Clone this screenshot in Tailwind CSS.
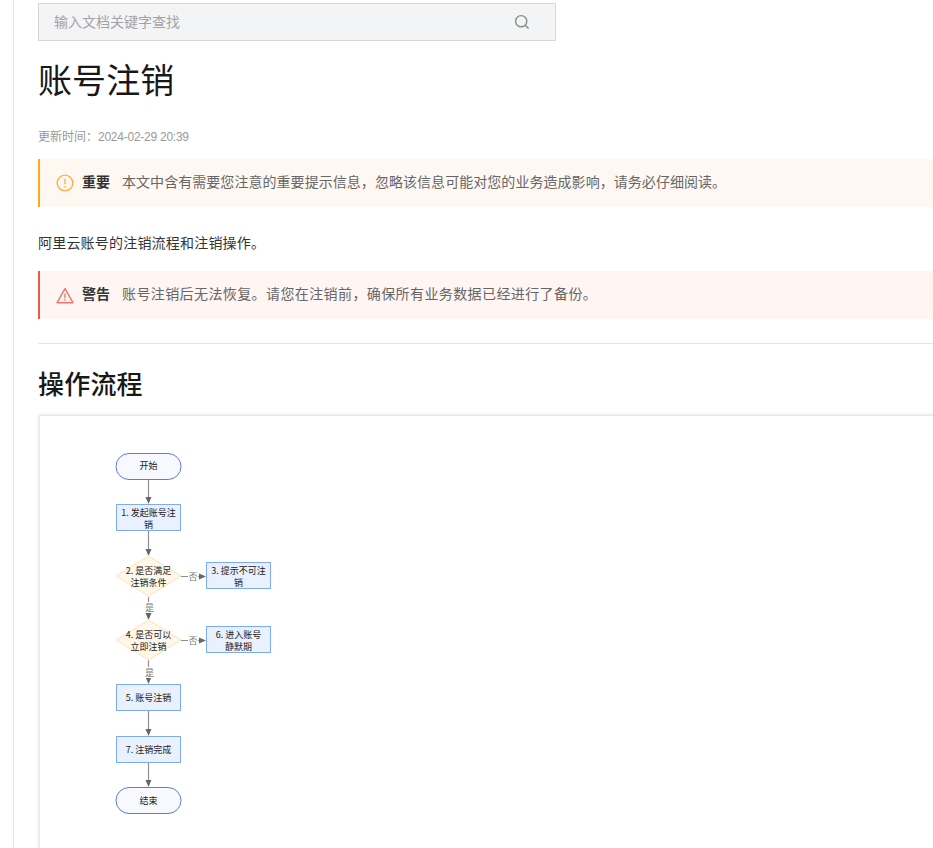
<!DOCTYPE html>
<html lang="zh">
<head>
<meta charset="utf-8">
<script src="https://cdn.jsdelivr.net/npm/@tailwindcss/browser@4"></script>
</head>
<body class="bg-white overflow-hidden font-['Noto_Sans_CJK_SC','Noto_Sans',sans-serif]">
<div class="w-[933px] h-[848px] overflow-hidden flex">
  <div class="w-[14px] shrink-0 border-r border-[#e5e5e5] h-full"></div>
  <main class="w-[919px] pl-[24px] pt-[3px] flex flex-col items-start shrink-0">
    <div class="w-[518px] h-[38px] shrink-0 bg-[#f3f4f6] border border-[#d5d7da] pl-[15px] pr-[25px] flex items-center justify-between">
      <span class="text-[14px] leading-[34px] pb-[4px] h-[36px] text-[#a3a3a3]">输入文档关键字查找</span>
      <svg width="16" height="16" viewBox="0 0 16 16" fill="none" stroke="#8c8c8c" stroke-width="1.4"><circle cx="7.2" cy="7.2" r="5.6"/><path d="M11.2 11.2L14.6 14.6"/></svg>
    </div>
    <h1 class="mt-[14px] shrink-0 text-[34px] tracking-[0.1px] leading-[48px] font-normal text-[#181818]">账号注销</h1>
    <p class="mt-[23px] shrink-0 text-[12px] leading-[20px] text-[#999999]">更新时间：<span class="font-['Liberation_Sans',sans-serif] tracking-[-0.25px]">2024-02-29 20:39</span></p>
    <div class="mt-[12px] w-[895px] h-[48px] shrink-0 bg-[#fff8f2] border-l-2 border-[#fbab13] pl-[16px] flex items-center text-[14px] whitespace-nowrap">
      <svg width="18" height="18" viewBox="0 0 17 17" fill="none" stroke="#fbb03b" stroke-width="1.3" class="shrink-0"><circle cx="8.5" cy="8.5" r="7.4"/><path d="M8.5 4.4v5.2M8.5 11.4v1.4"/></svg>
      <strong class="ml-[8px] pb-[3px] font-bold text-[#333333]">重要</strong>
      <span class="ml-[12px] pb-[3px] tracking-[0.05px] text-[#666666]">本文中含有需要您注意的重要提示信息，忽略该信息可能对您的业务造成影响，请务必仔细阅读。</span>
    </div>
    <p class="mt-[25px] mb-px shrink-0 text-[14px] leading-[20px] tracking-[0.2px] text-[#333333]">阿里云账号的注销流程和注销操作。</p>
    <div class="mt-[18px] w-[895px] h-[48px] shrink-0 bg-[#fff5f3] border-l-2 border-[#ec5a42] pl-[16px] flex items-center text-[14px] whitespace-nowrap">
      <svg width="18" height="17" viewBox="0 0 17 16" fill="none" stroke="#ee7564" stroke-width="1.3" class="shrink-0"><path d="M8.5 1.5L16 14.8H1Z" stroke-linejoin="round"/><path d="M8.5 6v4.6M8.5 11.6v1.4"/></svg>
      <strong class="ml-[8px] pb-[3px] font-bold text-[#333333]">警告</strong>
      <span class="ml-[12px] pb-[3px] tracking-[0.4px] text-[#666666]">账号注销后无法恢复。请您在注销前，确保所有业务数据已经进行了备份。</span>
    </div>
    <div class="mt-[24px] w-[895px] shrink-0 border-t border-[#e5e5e5]"></div>
    <h2 class="mt-[20px] mb-px shrink-0 text-[26px] tracking-[0.2px] leading-[38px] font-medium text-[#181818]">操作流程</h2>
    <div class="mt-[12px] ml-px w-[900px] h-[500px] shrink-0 border border-[#e8e8e8] shadow-[0_0_4px_rgba(0,0,0,0.12)]">
      <svg width="300" height="420" viewBox="40 416 300 420" font-size="9" fill="#222222" text-anchor="middle" font-family="'Noto Sans CJK SC',sans-serif">
        <g stroke="#909090" stroke-width="1.2" fill="none">
          <path d="M148.500 479V498M148.500 531V550M181 576.500H200M148.500 597V614M181 640.500H200M148.500 660V678M148.500 711V730M148.500 763V781"/>
        </g>
        <g fill="#666666">
          <path d="M145.500 497h6l-3 7zM145.500 549h6l-3 7zM145.500 613h6l-3 7zM145.500 677h6l-3 7zM145.500 729h6l-3 7zM145.500 780h6l-3 7zM199 573.500v6l7-3zM199 637.500v6l7-3z"/>
        </g>
        <rect x="116" y="453.500" width="65" height="26" rx="13" fill="#f8f9ff" stroke="#5b7be0"/>
        <rect x="116" y="787.500" width="65" height="26" rx="13" fill="#f8f9ff" stroke="#5b7be0"/>
        <g fill="#e9f0fe" stroke="#7faafa">
          <rect x="116.500" y="504.500" width="64" height="26"/>
          <rect x="206.500" y="562.500" width="64" height="26"/>
          <rect x="206.500" y="626.500" width="64" height="26"/>
          <rect x="116.500" y="684.500" width="64" height="26"/>
          <rect x="116.500" y="736.500" width="64" height="26"/>
        </g>
        <g fill="#fff7e8" stroke="#fde3bd">
          <path d="M148.500 556L181 576L148.500 596L116 576Z"/>
          <path d="M148.500 620L181 640L148.500 660L116 640Z"/>
        </g>
        <text x="148.500" y="469">开始</text>
        <text x="148.500" y="516">1. 发起账号注</text>
        <text x="148.500" y="528">销</text>
        <text x="148.500" y="574">2. 是否满足</text>
        <text x="148.500" y="586">注销条件</text>
        <text x="238.500" y="574">3. 提示不可注</text>
        <text x="238.500" y="586">销</text>
        <text x="148.500" y="638">4. 是否可以</text>
        <text x="148.500" y="650">立即注销</text>
        <text x="238.500" y="637.500">6. 进入账号</text>
        <text x="238.500" y="649.500">静默期</text>
        <text x="148.500" y="701">5. 账号注销</text>
        <text x="148.500" y="752.500">7. 注销完成</text>
        <text x="148.500" y="804">结束</text>
        <g fill="#ffffff"><rect x="188" y="571" width="10" height="11"/><rect x="188" y="635" width="10" height="11"/><rect x="144" y="602" width="11" height="11"/><rect x="144" y="667" width="11" height="11"/></g>
        <g fill="#777777">
          <text x="193" y="579.500">否</text>
          <text x="193" y="643.500">否</text>
          <text x="149.500" y="611">是</text>
          <text x="149.500" y="676">是</text>
        </g>
      </svg>
    </div>
  </main>
</div>
</body>
</html>
